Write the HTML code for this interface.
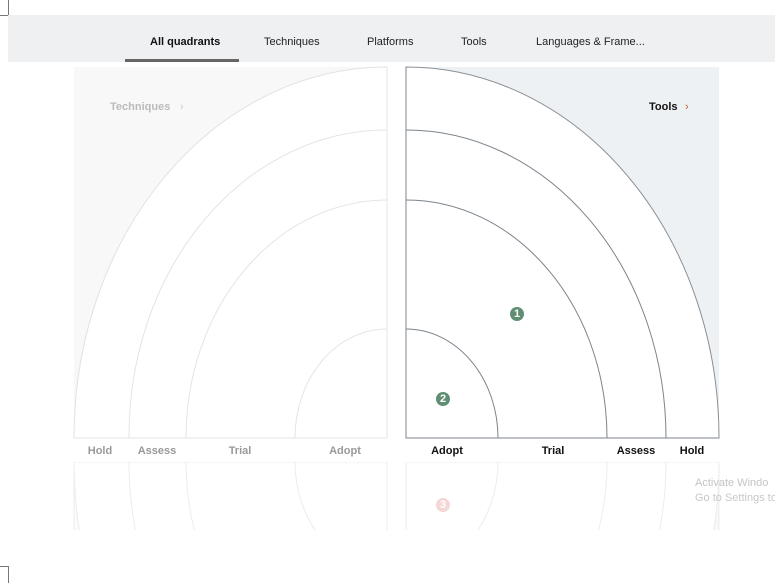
<!DOCTYPE html>
<html><head><meta charset="utf-8"><style>
html,body{margin:0;width:775px;height:583px;overflow:hidden;background:#fff;font-family:"Liberation Sans",sans-serif;}
svg{position:absolute;left:0;top:0;display:block}
text{font-family:"Liberation Sans",sans-serif;font-weight:bold;font-size:11px}
</style></head><body>
<svg width="775" height="583" viewBox="0 0 775 583">
<defs><clipPath id="bc"><rect x="0" y="462" width="775" height="68"/></clipPath></defs>
<path d="M0,15.5H8.5V0" fill="none" stroke="#777" stroke-width="1"/>
<path d="M0,566.5H8.5V583" fill="none" stroke="#777" stroke-width="1"/>
<rect x="8" y="15" width="767" height="47" fill="#eef0f2"/>
<rect x="125" y="59" width="114" height="3" fill="#666"/>
<g font-size="11" fill="#222">
<text x="150" y="45" fill="#111">All quadrants</text>
<text x="264" y="45" style="font-weight:normal">Techniques</text>
<text x="367" y="45" style="font-weight:normal">Platforms</text>
<text x="461" y="45" style="font-weight:normal">Tools</text>
<text x="536" y="45" style="font-weight:normal">Languages &amp; Frame...</text>
</g>
<rect x="74" y="67" width="313" height="371" fill="#f8f8f8"/>
<path d="M387,67 A313,371 0 0 0 74,438 H387Z" fill="#fff" stroke="#e2e2e2"/>
<g fill="none" stroke="#e4e4e4">
<path d="M387,130 A258,306 0 0 0 129,438"/>
<path d="M387,200 A201,238 0 0 0 186,438"/>
<path d="M387,329 A92,109 0 0 0 295,438"/>
<path d="M74,438H387V67"/>
</g>
<text x="110" y="110" fill="#bbb" font-size="12">Techniques</text>
<text x="180" y="110" fill="#ccc" font-size="13" style="font-weight:normal">›</text>
<rect x="406" y="67" width="313" height="371" fill="#eef1f4"/>
<path d="M406,67 A313,371 0 0 1 719,438 H406Z" fill="#fff" stroke="#8a9096"/>
<g fill="none" stroke="#7c848c">
<path d="M406,130 A260,308 0 0 1 666,438"/>
<path d="M406,200 A201,238 0 0 1 607,438"/>
<path d="M406,329 A92,109 0 0 1 498,438"/>
<path d="M406,67V438H719"/>
</g>
<text x="649" y="110" fill="#111" font-size="12">Tools</text>
<text x="685" y="110" fill="#c0602d" font-size="14" style="font-weight:normal">›</text>
<circle cx="517" cy="314" r="7" fill="#5f8e72"/>
<text x="517" y="317" fill="#fff" font-size="7" text-anchor="middle">1</text>
<circle cx="443" cy="399" r="7" fill="#5f8e72"/>
<text x="443" y="402" fill="#fff" font-size="7" text-anchor="middle">2</text>
<g fill="#999" text-anchor="middle">
<text x="100" y="454">Hold</text><text x="157" y="454">Assess</text><text x="240" y="454">Trial</text><text x="345" y="454">Adopt</text>
</g>
<g fill="#111" text-anchor="middle">
<text x="447" y="454">Adopt</text><text x="553" y="454">Trial</text><text x="636" y="454">Assess</text><text x="692" y="454">Hold</text>
</g>
<g clip-path="url(#bc)" fill="none" stroke="#ececec">
<rect x="74" y="462" width="313" height="120" fill="#fbfbfb"/>
<path d="M74,462 A313,371 0 0 0 387,833 V462Z" fill="#fff"/>
<path d="M129,462 A258,306 0 0 0 387,768"/>
<path d="M186,462 A201,238 0 0 0 387,700"/>
<path d="M295,462 A92,109 0 0 0 387,571"/>
<rect x="406" y="462" width="313" height="120" fill="#f7f8fa"/>
<path d="M719,462 A313,371 0 0 1 406,833 V462Z" fill="#fff"/>
<path d="M666,462 A260,308 0 0 1 406,770"/>
<path d="M607,462 A201,238 0 0 1 406,700"/>
<path d="M498,462 A92,109 0 0 1 406,571"/>
</g>
<circle cx="443" cy="505" r="7" fill="#f4d6d4"/>
<text x="443" y="508" fill="#fff" font-size="7" text-anchor="middle">3</text>
<text x="695" y="486" fill="#c4c4c4" font-size="12" style="font-weight:normal">Activate Windo</text>
<text x="695" y="501" fill="#c8c8c8" font-size="9" style="font-weight:normal">Go to Settings to ac</text>
</svg>
</body></html>
